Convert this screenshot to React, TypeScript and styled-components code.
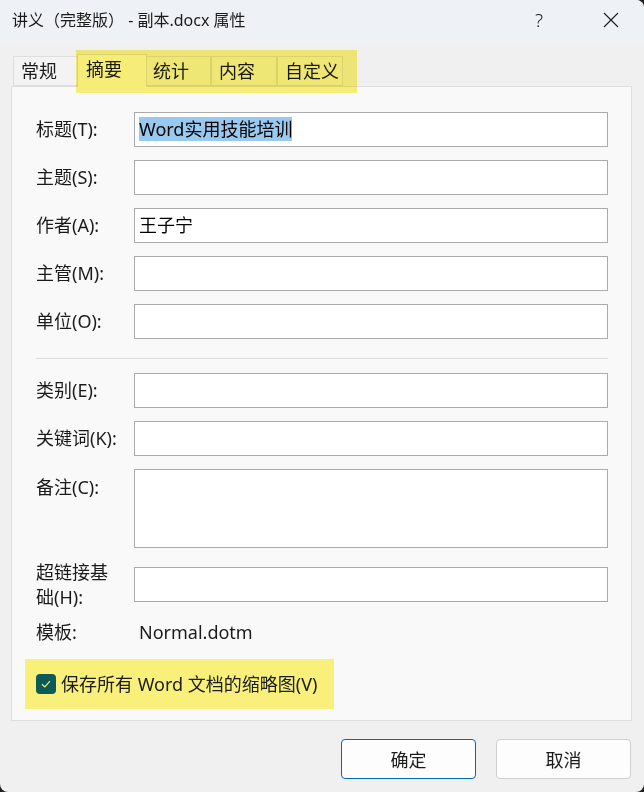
import { useState } from 'react';
import styled, { createGlobalStyle } from 'styled-components';

const GlobalStyle = createGlobalStyle`
  html, body {
    margin: 0;
    padding: 0;
    background: #202020;
  }
  body {
    font-family: "Noto Sans", "Noto Sans CJK SC", sans-serif;
    color: #1b1b1b;
  }
  * {
    box-sizing: border-box;
  }
`;

type Field = { label: React.ReactNode; value?: string; selected?: boolean; tall?: boolean };

const topFields: Field[] = [
  { label: '标题(T):', value: 'Word实用技能培训', selected: true },
  { label: '主题(S):' },
  { label: '作者(A):', value: '王子宁' },
  { label: '主管(M):' },
  { label: '单位(O):' },
];

const bottomFields: Field[] = [
  { label: '类别(E):' },
  { label: '关键词(K):' },
  { label: '备注(C):', tall: true },
  {
    label: (
      <>
        超链接基
        <br />
        础(H):
      </>
    ),
  },
];

const tabs = ['常规', '摘要', '统计', '内容', '自定义'];

export const App = () => {
  const [activeTab, setActiveTab] = useState(1);
  const [keepThumb, setKeepThumb] = useState(true);

  const renderField = (f: Field, idx: number) => (
    <FormRow key={idx} $tall={f.tall}>
      <Label $top={f.tall}>{f.label}</Label>
      <InputBox>
        {f.value && <InputText $selected={f.selected}>{f.value}</InputText>}
      </InputBox>
    </FormRow>
  );

  return (
    <Window>
      <GlobalStyle />
      <TitleBar>
        <Title>讲义（完整版） - 副本.docx 属性</Title>
        <TitleButton>?</TitleButton>
        <TitleButton>
          <svg width="16" height="16" viewBox="0 0 16 16">
            <path d="M1 1 L15 15 M15 1 L1 15" stroke="#1b1b1b" strokeWidth="1.1" fill="none" />
          </svg>
        </TitleButton>
      </TitleBar>

      <Body>
        <TabBar>
          {tabs.map((t, i) => (
            <Tab key={t} $active={i === activeTab} onClick={() => setActiveTab(i)}>
              {t}
            </Tab>
          ))}
          <TabHighlight />
        </TabBar>

        <Panel>
          <Form>
            {topFields.map(renderField)}
            <Divider />
            {bottomFields.map(renderField)}
            <FormRow>
              <Label>模板:</Label>
              <StaticValue>Normal.dotm</StaticValue>
            </FormRow>
          </Form>

          <CheckRow onClick={() => setKeepThumb((v) => !v)}>
            <CheckBox $checked={keepThumb}>
              {keepThumb && (
                <svg width="12" height="12" viewBox="0 0 12 12">
                  <path d="M2 6.3 L4.8 9 L10 3.2" stroke="#f3ec7d" strokeWidth="1.2" fill="none" />
                </svg>
              )}
            </CheckBox>
            保存所有 Word 文档的缩略图(V)
          </CheckRow>
        </Panel>

        <Footer>
          <Button $primary>确定</Button>
          <Button>取消</Button>
        </Footer>
      </Body>
    </Window>
  );
};

const Window = styled.div`
  width: 644px;
  height: 792px;
  background: #f0f0f0;
  border-radius: 0 8px 8px 8px;
  overflow: hidden;
  display: flex;
  flex-direction: column;
`;

const TitleBar = styled.div`
  height: 42px;
  background: #eef2f6;
  display: flex;
  align-items: center;
  padding-left: 12px;
  padding-right: 10px;
`;

const Title = styled.div`
  flex: 1;
  font-size: 16px;
  line-height: 20px;
  color: #1b1b1b;
  margin-top: -2px;
`;

const TitleButton = styled.div`
  width: 46px;
  height: 42px;
  margin-left: 26px;
  display: flex;
  align-items: center;
  justify-content: center;
  font-family: "Noto Sans", sans-serif;
  font-size: 19px;
  font-weight: 300;
  color: #1b1b1b;
  margin-top: -2px;

  &:first-of-type {
    margin-left: 0;
  }
`;

const Body = styled.div`
  flex: 1;
  display: flex;
  flex-direction: column;
  padding: 12px 12px 0 11px;
`;

const TabBar = styled.div`
  position: relative;
  display: flex;
  align-items: flex-end;
  height: 32px;
  padding-left: 2px;
`;

const Tab = styled.div<{ $active?: boolean }>`
  position: relative;
  z-index: ${(p) => (p.$active ? 2 : 1)};
  min-width: ${(p) => (p.$active ? '70px' : '66px')};
  height: ${(p) => (p.$active ? '33px' : '30px')};
  margin: ${(p) => (p.$active ? '0 -2px -1px' : '0')};
  padding: ${(p) => (p.$active ? '2px 2px 0 8px' : '2px 2px 0 7px')};
  font-size: 18px;
  line-height: 25px;
  background: ${(p) => (p.$active ? '#f9f9f9' : '#f3f3f3')};
  border: 1px solid #dedede;
  border-bottom: ${(p) => (p.$active ? 'none' : '1px solid #dedede')};
  cursor: default;
`;

const TabHighlight = styled.div`
  position: absolute;
  left: 65px;
  top: -4px;
  width: 281px;
  height: 43px;
  background: #fbf37b;
  mix-blend-mode: multiply;
  z-index: 5;
  pointer-events: none;
`;

const Panel = styled.div`
  height: 635px;
  background: #f9f9f9;
  border: 1px solid #dedede;
  padding: 25px 23px 0 24px;
  display: flex;
  flex-direction: column;
`;

const Form = styled.div`
  display: flex;
  flex-direction: column;
  gap: 13px;
`;

const FormRow = styled.div<{ $tall?: boolean }>`
  display: flex;
  align-items: ${(p) => (p.$tall ? 'flex-start' : 'center')};
  height: ${(p) => (p.$tall ? '79px' : '35px')};
  margin-bottom: ${(p) => (p.$tall ? '6px' : '0')};
`;

const Label = styled.div<{ $top?: boolean }>`
  width: 98px;
  flex-shrink: 0;
  font-size: 18px;
  line-height: 25px;
  color: #1b1b1b;
  padding-top: ${(p) => (p.$top ? '6px' : '0')};
`;

const InputBox = styled.div`
  flex: 1;
  height: 100%;
  background: #fff;
  border: 1px solid #ababab;
  padding: 4px 4px 0;
`;

const InputText = styled.span<{ $selected?: boolean }>`
  display: inline-block;
  font-size: 18px;
  line-height: 24px;
  color: #000;
  background: ${(p) => (p.$selected ? '#99c9ef' : 'transparent')};
`;

const StaticValue = styled.div`
  font-size: 18px;
  line-height: 25px;
  padding-left: 5px;
  color: #1b1b1b;
`;

const Divider = styled.div`
  height: 1px;
  background: #dcdcdc;
  margin: 6px 0 1px;
`;

const CheckRow = styled.div`
  align-self: flex-start;
  display: flex;
  align-items: center;
  gap: 5px;
  margin: 9px 0 0 -11px;
  height: 50px;
  padding: 0 17px 0 11px;
  background: #f8f07a;
  font-size: 18px;
  line-height: 25px;
  color: #1b1b1b;
  cursor: default;
`;

const CheckBox = styled.div<{ $checked?: boolean }>`
  width: 20px;
  height: 20px;
  border-radius: 4px;
  background: ${(p) => (p.$checked ? '#0b5a57' : '#fff')};
  border: ${(p) => (p.$checked ? 'none' : '1px solid #8a8a8a')};
  display: flex;
  align-items: center;
  justify-content: center;
`;

const Footer = styled.div`
  display: flex;
  justify-content: flex-end;
  gap: 20px;
  padding: 18px 1px 0 0;
`;

const Button = styled.button<{ $primary?: boolean }>`
  width: 135px;
  height: 40px;
  background: #fdfdfd;
  border: 1px solid ${(p) => (p.$primary ? '#0067c0' : '#d0d0d0')};
  border-radius: 4px;
  font-family: "Noto Sans", "Noto Sans CJK SC", sans-serif;
  font-size: 18px;
  color: #1b1b1b;
  cursor: pointer;
`;

export default App;
